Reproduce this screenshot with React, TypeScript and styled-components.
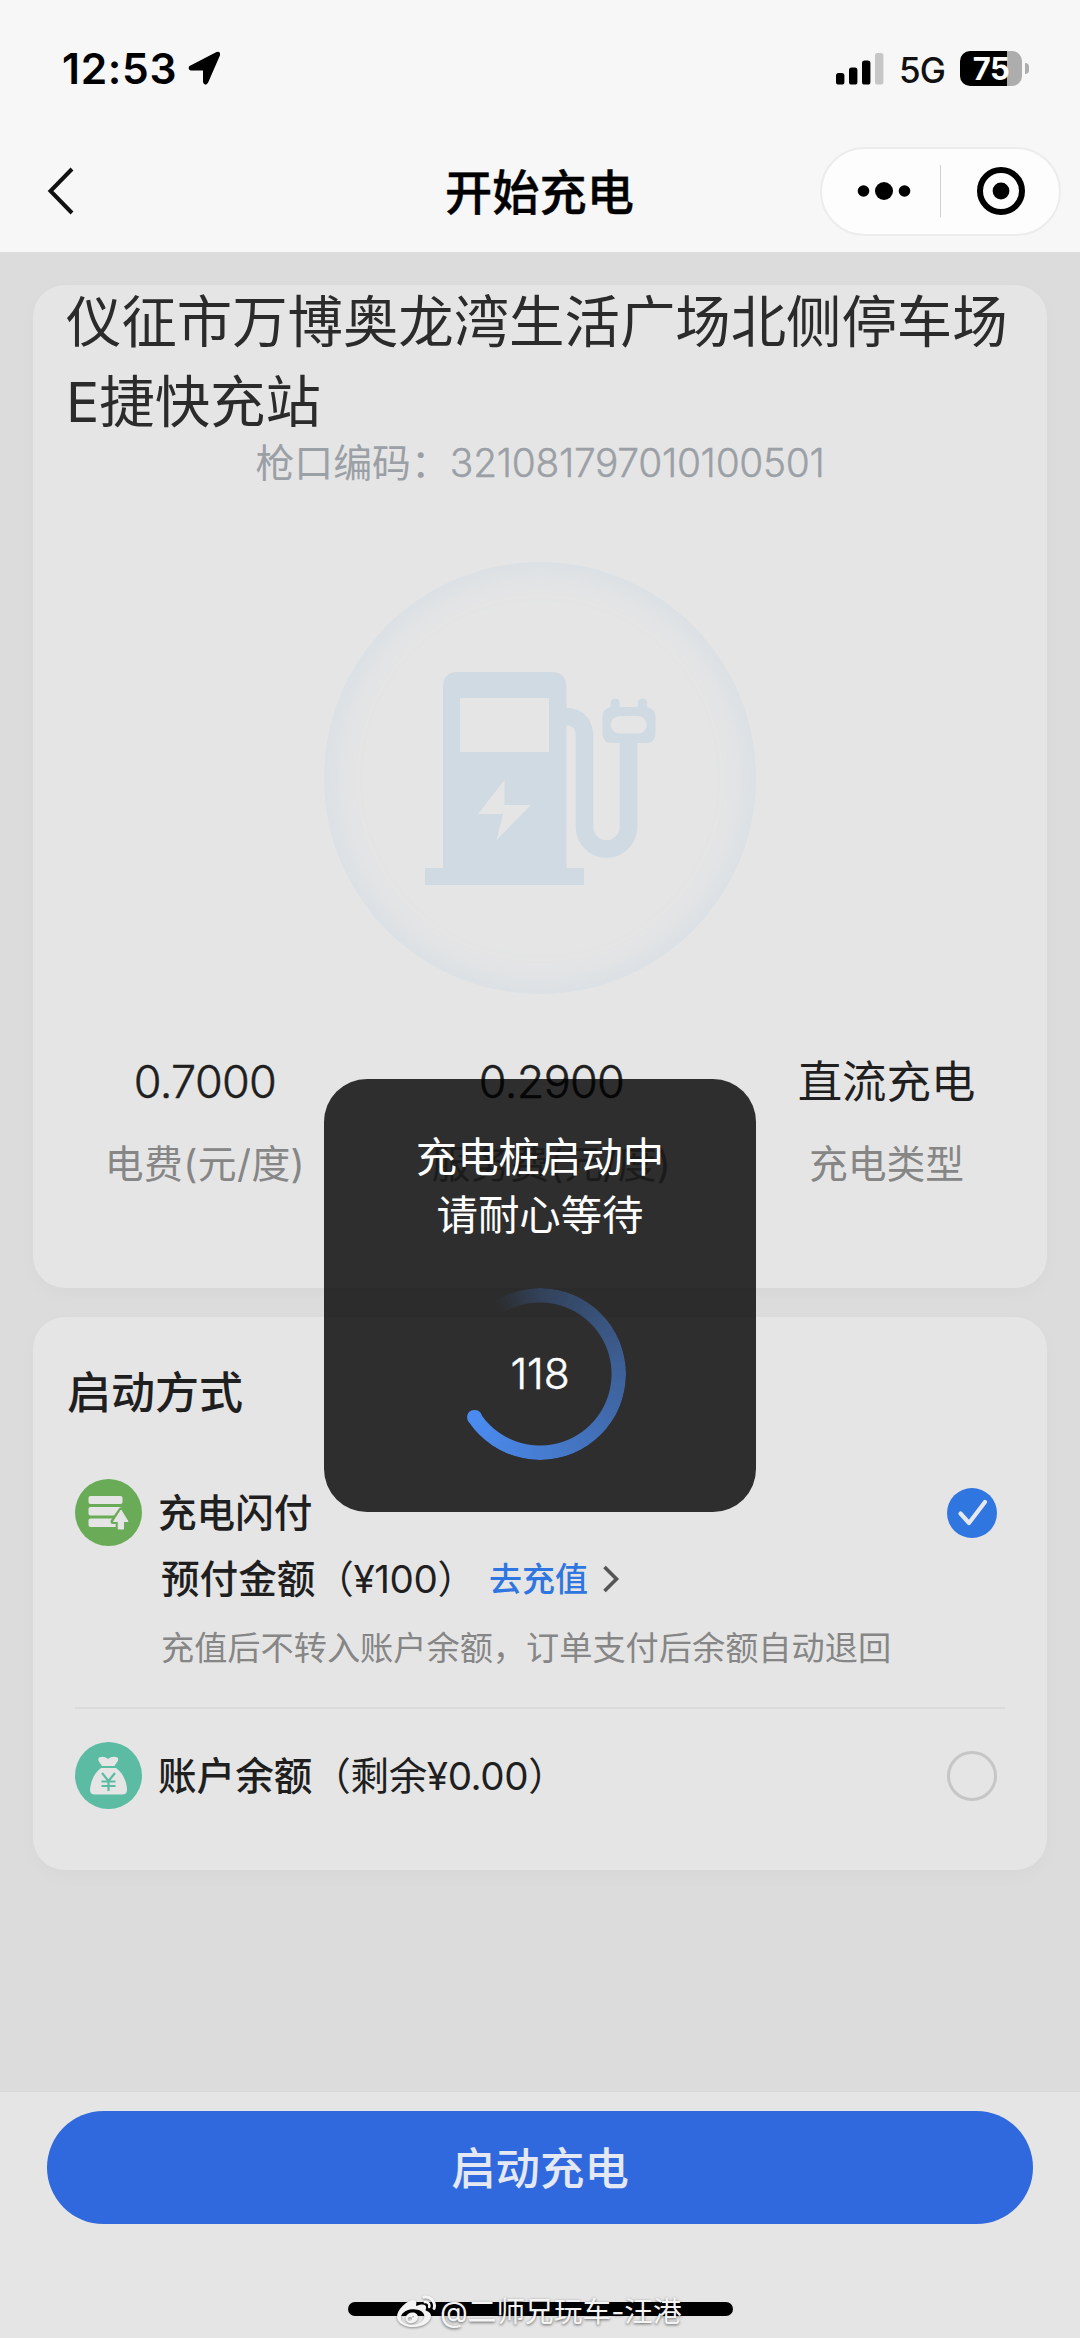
import React from "react";
import styled, { createGlobalStyle } from "styled-components";
import { FaWeibo } from "react-icons/fa";

const GlobalStyle = createGlobalStyle`
  *, *::before, *::after { box-sizing: border-box; }
  html, body { margin: 0; padding: 0; background: #dcdcdc; }
  body {
    font-family: Inter, "Noto Sans CJK SC", "Liberation Sans", sans-serif;
    color: #1f1f1f;
    -webkit-font-smoothing: antialiased;
  }
`;

const Screen = styled.div`
  position: relative;
  width: 1080px;
  height: 2338px;
  display: flex;
  flex-direction: column;
  overflow: hidden;
  background: #dcdcdc;
`;

const Header = styled.header`
  height: 252px;
  flex: none;
  background: #f7f7f7;
`;

const StatusBar = styled.div`
  height: 137px;
  padding: 0 51px 0 62px;
  display: flex;
  align-items: center;
  justify-content: space-between;
`;

const StatusSide = styled.div`
  display: flex;
  align-items: center;
`;

const Clock = styled.span`
  font-size: 42.5px;
  line-height: 50px;
  font-weight: 600;
  color: #000;
  width: 125px;
  white-space: nowrap;
  letter-spacing: 0.7px;
`;

const Network = styled.span`
  font-size: 35px;
  line-height: 40px;
  font-weight: 500;
  color: #111;
  margin: 2px 15px 0 15px;
  width: 46px;
  letter-spacing: -0.8px;
`;

const Battery = styled.div`
  width: 62px;
  height: 35px;
  border-radius: 10px;
  background: linear-gradient(90deg, #000 47px, #adadad 47px);
  color: #fff;
  font-size: 31px;
  line-height: 35px;
  font-weight: 700;
  text-align: center;
  letter-spacing: -0.5px;
`;

const BatteryTip = styled.div`
  width: 4px;
  height: 11px;
  margin-left: 3px;
  border-radius: 0 6px 6px 0;
  background: #adadad;
`;

const NavBar = styled.div`
  height: 108px;
  padding: 0 19px 0 46px;
  display: grid;
  grid-template-columns: 241px 1fr 241px;
  align-items: center;
`;

const NavTitle = styled.h1`
  margin: 0;
  padding: 3px 28px 0 0;
  font-size: 47.2px;
  line-height: 60px;
  font-weight: 500;
  text-align: center;
  color: #000;
  -webkit-text-stroke: 0.4px #000;
`;

const Capsule = styled.div`
  width: 241px;
  height: 89px;
  border: 2px solid #ececec;
  border-radius: 45px;
  background: #fdfdfd;
  display: grid;
  grid-template-columns: 1fr 1px 1fr;
  align-items: center;
  justify-items: center;

  svg:first-child { margin-left: 5px; }
  svg:last-child { margin-left: 1px; }
`;

const CapsuleLine = styled.div`
  width: 1px;
  height: 52px;
  background: #d0d0d0;
`;

const Content = styled.main`
  flex: 1;
  padding: 33px 33px 0;
  display: flex;
  flex-direction: column;
  gap: 29px;
`;

const Card = styled.section<{ $height: number }>`
  flex: none;
  height: ${(p) => p.$height}px;
  border-radius: 32px;
  background: #e5e5e5;
  box-shadow: 0 6px 20px rgba(0, 0, 0, 0.025);
  display: flex;
  flex-direction: column;
`;

const StationName = styled.h2`
  margin: 0;
  padding: 0 33px;
  height: 157px;
  font-size: 55.4px;
  line-height: 80px;
  font-weight: 400;
  color: #2b2b2b;
  display: flex;
  flex-direction: column;
  justify-content: flex-end;
  white-space: nowrap;
`;

const GunCode = styled.p`
  margin: -1px 0 0;
  font-size: 38.9px;
  line-height: 44px;
  text-align: center;
  color: #9ba0a6;
  white-space: nowrap;
`;

const CodeDigits = styled.span`
  letter-spacing: -0.3px;
  font-weight: 300;
  -webkit-text-stroke: 0.4px #9ba0a6;
`;

const PumpDisc = styled.div`
  width: 432px;
  height: 432px;
  margin: 77px auto 0;
  border-radius: 50%;
  box-shadow: inset 0 0 42px #d3dde6;
`;

const Stats = styled.div`
  margin-top: 60px;
  display: grid;
  grid-template-columns: 344px 349px 1fr;
`;

const Stat = styled.div`
  display: flex;
  flex-direction: column;
  align-items: center;
  gap: 26px;
  white-space: nowrap;
`;

const StatValue = styled.div<{ $numeric?: boolean }>`
  font-size: ${(p) => (p.$numeric ? 45 : 44.4)}px;
  line-height: 56px;
  color: #1f1f1f;
  font-weight: ${(p) => (p.$numeric ? 300 : 400)};
  -webkit-text-stroke: ${(p) => (p.$numeric ? "0.5px #1f1f1f" : "0")};
  letter-spacing: ${(p) => (p.$numeric ? "-0.7px" : "0")};
`;

const StatLabel = styled.div<{ $numeric?: boolean }>`
  font-size: 38.8px;
  line-height: 56px;
  color: #868686;
  letter-spacing: ${(p) => (p.$numeric ? "0.4px" : "0")};
`;

const SectionTitle = styled.h3`
  margin: 44px 0 0 34px;
  font-size: 44px;
  line-height: 64px;
  font-weight: 500;
`;

const MethodRow = styled.div<{ $top: number }>`
  margin-top: ${(p) => p.$top}px;
  padding: 0 50px 0 42px;
  height: 67px;
  display: flex;
  align-items: center;
`;

const MethodName = styled.div`
  flex: 1;
  margin-left: 16px;
  font-size: 38.6px;
  line-height: 56px;
  font-weight: 500;
  white-space: nowrap;
`;

const Amount = styled.span`
  font-weight: 400;
  letter-spacing: -0.4px;
`;

const PrepayRow = styled.div`
  margin: 5px 0 0 128px;
  height: 56px;
  display: flex;
  align-items: center;
  font-size: 38.6px;
  line-height: 56px;
  font-weight: 500;
  white-space: nowrap;
`;

const PrepayText = styled.div`
  width: 328px;
`;

const Recharge = styled.a`
  font-size: 33px;
  font-weight: 500;
  color: #2f76e0;
  margin-right: 14px;
`;

const Note = styled.p`
  margin: 17px 0 0 128px;
  font-size: 33.2px;
  line-height: 48px;
  color: #868686;
  white-space: nowrap;
`;

const Divider = styled.div`
  height: 2px;
  margin: 35px 42px 0;
  background: #dadada;
`;

const EmptyRadio = styled.div`
  width: 50px;
  height: 50px;
  border-radius: 50%;
  border: 3px solid #c6c6c6;
`;

const Footer = styled.footer`
  flex: none;
  height: 247px;
  padding: 19px 47px 0;
  border-top: 1px solid #d7d7d7;
  background: #e5e5e5;
  display: flex;
  flex-direction: column;
  align-items: center;
`;

const StartButton = styled.button`
  width: 986px;
  height: 113px;
  border: 0;
  border-radius: 57px;
  background: #3068de;
  color: #e4e8f3;
  font-family: inherit;
  font-size: 44.4px;
  font-weight: 500;
  padding: 0 0 4px;
`;

const HomeIndicator = styled.div`
  width: 385px;
  height: 14px;
  margin-top: 78px;
  border-radius: 7px;
  background: #000;
`;

const Watermark = styled.div`
  position: absolute;
  left: 397px;
  top: 2291px;
  height: 42px;
  display: flex;
  align-items: center;
  gap: 4px;
  color: #f4f4f4;
  font-size: 28.7px;
  line-height: 42px;
  white-space: nowrap;
  text-shadow: 0 1px 3px rgba(0, 0, 0, 0.6);

  svg { filter: drop-shadow(0 1px 1px rgba(0, 0, 0, 0.4)); }
`;

const Toast = styled.div`
  position: absolute;
  left: 324px;
  top: 1079px;
  width: 432px;
  height: 433px;
  border-radius: 43px;
  background: rgba(0, 0, 0, 0.8);
  display: flex;
  flex-direction: column;
  align-items: center;
  padding-top: 49px;
`;

const ToastText = styled.div`
  font-size: 41.4px;
  line-height: 58px;
  text-align: center;
  color: #fff;
`;

const Ring = styled.div`
  position: relative;
  width: 172px;
  height: 172px;
  margin-top: 44px;
  display: flex;
  align-items: center;
  justify-content: center;
`;

const RingArc = styled.div`
  position: absolute;
  inset: 0;
  border-radius: 50%;
  background: conic-gradient(
    from -33deg,
    rgba(77, 145, 252, 0) 0deg,
    rgba(77, 145, 252, 0.22) 33deg,
    rgba(77, 145, 252, 0.52) 123deg,
    rgba(77, 145, 252, 0.8) 213deg,
    rgba(77, 145, 252, 0.95) 270deg,
    transparent 270deg
  );
  mask: radial-gradient(circle, transparent 71px, #000 72px);
`;

const RingCap = styled.div`
  position: absolute;
  left: 13.2px;
  top: 121.8px;
  width: 14.4px;
  height: 14.4px;
  border-radius: 50%;
  background: #4b8bf0;
`;

const Countdown = styled.span`
  font-size: 42.5px;
  line-height: 50px;
  color: #fff;
  font-weight: 300;
  -webkit-text-stroke: 0.5px #fff;
  letter-spacing: -0.2px;
`;

const LocationArrow = () => (
  <svg width="34" height="35" viewBox="0 0 34 35">
    <path d="M30 2 L3 16 Q2 18 4 18.4 L17 18.6 L17 31 Q18 34 20 31.5 L32 4 Q32.5 1 30 2 Z" fill="#000" stroke="#000" strokeWidth="2" strokeLinejoin="round" />
  </svg>
);

const Signal = () => (
  <svg width="48" height="32" viewBox="0 0 48 32">
    <rect x="0" y="20" width="8.4" height="11.5" rx="2.6" fill="#000" />
    <rect x="13" y="14.5" width="8.4" height="17" rx="2.6" fill="#000" />
    <rect x="26" y="7.5" width="8.4" height="24" rx="2.6" fill="#000" />
    <rect x="39" y="0" width="8.4" height="31.5" rx="2.6" fill="#c6c6c6" />
  </svg>
);

const BackIcon = () => (
  <svg width="30" height="50" viewBox="0 0 30 50" fill="none">
    <path d="M26 3 L4.500 25 L26 47" stroke="#111" strokeWidth="4" />
  </svg>
);

const MoreIcon = () => (
  <svg width="54" height="20" viewBox="0 0 54 20">
    <circle cx="6.500" cy="10" r="5.800" />
    <circle cx="27" cy="10" r="9" />
    <circle cx="47.500" cy="10" r="5.800" />
  </svg>
);

const CloseIcon = () => (
  <svg width="50" height="50" viewBox="0 0 50 50">
    <circle cx="25" cy="25" r="21" fill="none" stroke="#000" strokeWidth="6" />
    <circle cx="25" cy="25" r="8.400" />
  </svg>
);

const PumpIcon = () => (
  <svg width="432" height="432" viewBox="0 0 432 432">
    <g transform="translate(-24 -22)">
      <path
        fill="#cfdae3"
        fillRule="evenodd"
        d="M143 328 V147 Q143 132 158 132 H251 Q266.500 132 266.500 147 V328 H284 V345 H125 V328 Z M160 158 H249 V212 H160 Z M204.500 240 L178 274 H203 L196.500 300 L231 265 H204.500 Z"
      />
      <path d="M264 176.500 H267 Q284.500 178 284.500 197 V287 A22 22 0 0 0 328.500 287 V202" fill="none" stroke="#cfdae3" strokeWidth="17.500" />
      <path
        fill="#cfdae3"
        fillRule="evenodd"
        d="M310.500 167 V163 a4.600 4.600 0 0 1 9.200 0 V167 H338 V163 a4.600 4.600 0 0 1 9.200 0 V167 Q355.500 169 355.500 177 V193 Q355.500 203 346 203 H312 Q302.500 203 302.500 193 V177 Q302.500 169 310.500 167 Z M319.500 176 a8.800 8.800 0 0 0 0 17.600 H338 a8.800 8.800 0 0 0 0 -17.600 Z"
      />
    </g>
  </svg>
);

const PrepayIcon = () => (
  <svg width="67" height="67" viewBox="0 0 67 67">
    <circle cx="33.500" cy="33.500" r="33.500" fill="#6aab57" />
    <g fill="#e5e5e5">
      <rect x="13.500" y="17" width="34" height="8" rx="2" />
      <rect x="13.500" y="28" width="34" height="8.500" rx="2" />
      <rect x="13.500" y="39.500" width="31" height="8.500" rx="2" />
    </g>
    <path d="M46 31 L53.500 42.500 H48.500 V50 H43.200 V42.500 H38 Z" fill="#e5e5e5" stroke="#6aab57" strokeWidth="5" strokeLinejoin="round" />
    <path d="M46 31 L53 42.500 H48.500 V50 H43.200 V42.500 H38.500 Z" fill="#e5e5e5" stroke="#e5e5e5" strokeWidth="1" strokeLinejoin="round" />
  </svg>
);

const BalanceIcon = () => (
  <svg width="67" height="67" viewBox="0 0 67 67">
    <circle cx="33.500" cy="33.500" r="33.500" fill="#5bbba3" />
    <path d="M27 24 C24.500 20 22 18 24 15.500 C27 14 30 14.500 33 17 C36 14.500 39.500 14 42.500 15.500 C44.500 18 42 20 39.500 24 Z" fill="#e5e5e5" />
    <path d="M26 26 H41 C48 31 52 40 52 48 Q52 52.500 47 52.500 H20 Q15 52.500 15 48 C15.500 40 19 31 26 26 Z" fill="#e5e5e5" />
    <path d="M27 31 L33.500 39 L40 31 M33.500 39 V49 M26.500 39.500 H40.500 M26.500 44 H40.500" fill="none" stroke="#5bbba3" strokeWidth="2.200" />
  </svg>
);

const CheckedIcon = () => (
  <svg width="50" height="50" viewBox="0 0 50 50">
    <circle cx="25" cy="25" r="25" fill="#2f76e0" />
    <path d="M13.500 25.500 L22 35 L38 14" fill="none" stroke="#e5e8ee" strokeWidth="4.200" strokeLinecap="round" strokeLinejoin="round" />
  </svg>
);

const ForwardIcon = () => (
  <svg width="18" height="28" viewBox="0 0 18 28" fill="none">
    <path d="M2.500 2 L14.500 14 L2.500 26" stroke="#555" strokeWidth="3.600" />
  </svg>
);

const stats = [
  { value: "0.7000", label: "电费(元/度)", numeric: true },
  { value: "0.2900", label: "服务费(元/度)", numeric: true },
  { value: "直流充电", label: "充电类型", numeric: false },
];

export default function App() {
  return (
    <Screen>
      <GlobalStyle />
      <Header>
        <StatusBar>
          <StatusSide>
            <Clock>12:53</Clock>
            <LocationArrow />
          </StatusSide>
          <StatusSide>
            <Signal />
            <Network>5G</Network>
            <Battery>75</Battery>
            <BatteryTip />
          </StatusSide>
        </StatusBar>
        <NavBar>
          <BackIcon />
          <NavTitle>开始充电</NavTitle>
          <Capsule>
            <MoreIcon />
            <CapsuleLine />
            <CloseIcon />
          </Capsule>
        </NavBar>
      </Header>

      <Content>
        <Card $height={1003}>
          <StationName>
            <span>仪征市万博奥龙湾生活广场北侧停车场</span>
            <span>E捷快充站</span>
          </StationName>
          <GunCode>
            枪口编码：<CodeDigits>321081797010100501</CodeDigits>
          </GunCode>
          <PumpDisc>
            <PumpIcon />
          </PumpDisc>
          <Stats>
            {stats.map((s) => (
              <Stat key={s.label}>
                <StatValue $numeric={s.numeric}>{s.value}</StatValue>
                <StatLabel $numeric={s.numeric}>{s.label}</StatLabel>
              </Stat>
            ))}
          </Stats>
        </Card>

        <Card $height={553}>
          <SectionTitle>启动方式</SectionTitle>
          <MethodRow $top={54}>
            <PrepayIcon />
            <MethodName>充电闪付</MethodName>
            <CheckedIcon />
          </MethodRow>
          <PrepayRow>
            <PrepayText>
              预付金额<Amount>（¥100）</Amount>
            </PrepayText>
            <Recharge>去充值</Recharge>
            <ForwardIcon />
          </PrepayRow>
          <Note>充值后不转入账户余额，订单支付后余额自动退回</Note>
          <Divider />
          <MethodRow $top={33}>
            <BalanceIcon />
            <MethodName>
              账户余额<Amount>（剩余¥0.00）</Amount>
            </MethodName>
            <EmptyRadio />
          </MethodRow>
        </Card>
      </Content>

      <Footer>
        <StartButton>启动充电</StartButton>
        <HomeIndicator />
      </Footer>

      <Toast>
        <ToastText>
          充电桩启动中
          <br />
          请耐心等待
        </ToastText>
        <Ring>
          <RingArc />
          <RingCap />
          <Countdown>118</Countdown>
        </Ring>
      </Toast>

      <Watermark>
        <FaWeibo size={39} />
        <span>@二师兄玩车-汪港</span>
      </Watermark>
    </Screen>
  );
}
